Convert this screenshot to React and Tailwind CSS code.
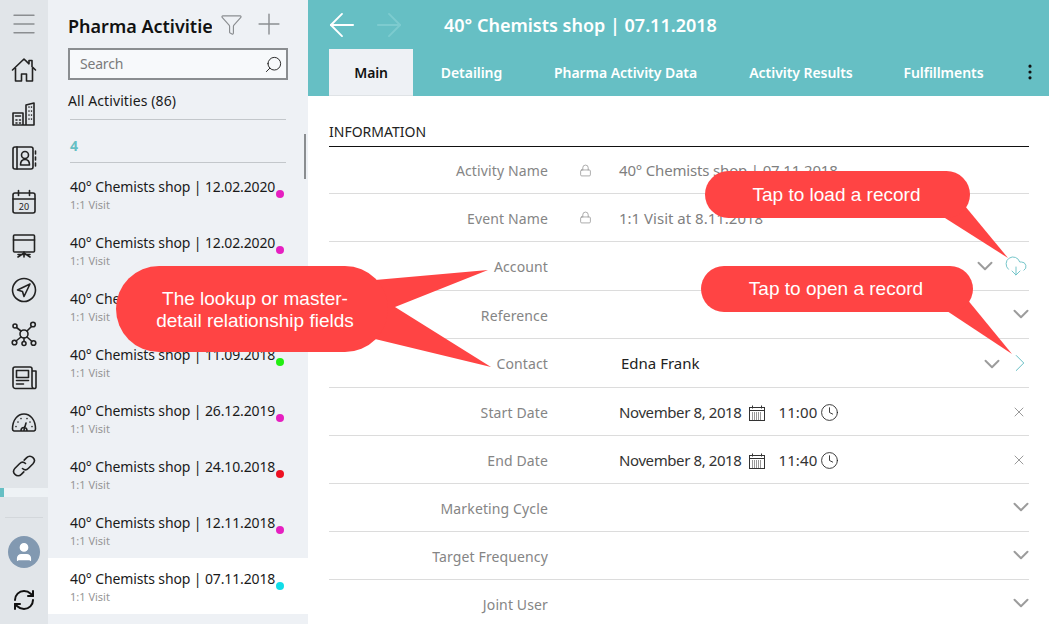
import {
  ArrowLeft,
  ArrowRight,
  ChevronDown,
  ChevronRight,
  Clock,
  CloudDownload,
  EllipsisVertical,
  Funnel,
  Lock,
  Menu,
  Plus,
  RefreshCw,
  Search,
  User,
  X,
} from "lucide-react";

const FONT = "font-['Noto_Sans',sans-serif]";

function RailIcon({ children }) {
  return (
    <div className="flex h-11 items-center justify-center">
      <svg width="26" height="26" viewBox="0 0 26 26" fill="none" stroke="#222" strokeWidth="1.6" strokeLinejoin="round" strokeLinecap="round">
        {children}
      </svg>
    </div>
  );
}

function Rail() {
  return (
    <div className="flex w-12 shrink-0 flex-col bg-[#e1e5e9]">
      <div className="flex h-12 items-center justify-center">
        <Menu size={30} strokeWidth={1.1} className="text-[#8b8e91]" />
      </div>
      <RailIcon>
        <path d="M1.5 13 13 2l5 4.8V3.5h3v6.2L24.5 13M4.5 11v13h6v-7h5v7h6V11" />
      </RailIcon>
      <RailIcon>
        <path d="M15 24V4l8-2v22zM2 24V12h10v12zM2 24h21M18 6v.1M20.5 6v.1M18 10v.1M20.5 10v.1M18 14v.1M20.5 14v.1M18 18v.1M20.5 18v.1M4.5 15h5M5 19h1M8.5 19h1M5 22h1M8.5 22h1" />
      </RailIcon>
      <RailIcon>
        <rect x="2" y="2" width="20" height="22" rx="2" />
        <path d="M6 2v22M24.5 6v3M24.5 12v3M24.5 18v3M9.5 20c0-4 2-5.500 4.500-5.500s4.500 1.500 4.500 5.500z" />
        <circle cx="14" cy="10" r="3.500" />
      </RailIcon>
      <RailIcon>
        <rect x="2" y="4" width="22" height="20" rx="2" />
        <path d="M2 10h22M7.500 1.500v5M18.500 1.500v5" />
        <text x="13" y="21" textAnchor="middle" fontSize="9" fill="#222" stroke="none">20</text>
      </RailIcon>
      <RailIcon>
        <rect x="2.500" y="2" width="21" height="17" rx="1" />
        <path d="M2.500 7h21M13 19v5M13 20l-6 4M13 20l6 4M7 21.500h12" />
      </RailIcon>
      <RailIcon>
        <circle cx="13" cy="13" r="11.500" />
        <path d="M19 7 6.500 13l5 1.500 1.500 5z" />
      </RailIcon>
      <RailIcon>
        <circle cx="13" cy="13" r="4" />
        <circle cx="4" cy="5" r="2" />
        <circle cx="22" cy="3.500" r="2.300" />
        <circle cx="3.500" cy="21.500" r="2.300" />
        <circle cx="13" cy="22.500" r="2" />
        <circle cx="22.500" cy="22" r="2.300" />
        <path d="M5.500 6.500 10 10M20.500 5.500 16 10M5 20l5-4M13 17v3.500M21 20.500 16 16" />
      </RailIcon>
      <RailIcon>
        <path d="M21 21V4a2 2 0 0 0-2-2H4a2 2 0 0 0-2 2v17a2.500 2.500 0 0 0 2.500 2.500h19A1.500 1.500 0 0 0 25 22V6h-4M21 21a2.500 2.500 0 0 0 2.500 2.500" />
        <rect x="5.500" y="5.500" width="12" height="7" />
        <path d="M5.500 15.500h12M5.500 19h7" />
      </RailIcon>
      <RailIcon>
        <path d="M3 22a2 2 0 0 1-1.500-2C1.500 11 6.500 5 13 5s11.500 6 11.500 15a2 2 0 0 1-1.500 2zM13 21l2-7M7 13v.1M10 9.500v.1M16 9.500v.1M19 13v.1M5 17.500v.1M21 17.500v.1M10 21.500a3 3 0 0 1 6 0" />
      </RailIcon>
      <RailIcon>
        <path d="M11.500 15.500c2 2 4.500 1.300 6-.2l4.500-4.500c1.800-2 1.800-4.500 0-6.200s-4.500-1.800-6.300 0l-2.500 2.500" />
        <path d="M14.500 10.500c-2-2-4.500-1.300-6 .2L4 15.200c-1.800 2-1.800 4.500 0 6.200s4.500 1.800 6.300 0l2.500-2.500" />
      </RailIcon>
      <div className="h-[9px] bg-[#eef2f5]">
        <div className="h-full w-1 bg-[#66bfc4]" />
      </div>
      <div className="mx-[5px] mt-5 border-t border-[#d3d7db]" />
      <div className="mx-2 mt-[18px] flex h-8 w-8 items-center justify-center overflow-hidden rounded-full bg-[#8299b1]">
        <User size={22} fill="#fff" stroke="#fff" strokeWidth={1.5} />
      </div>
      <div className="mt-5 flex justify-center">
        <RefreshCw size={24} strokeWidth={2} className="text-[#111]" />
      </div>
    </div>
  );
}

const activities = [
  { date: "12.02.2020", dot: "bg-[#e61fc0]" },
  { date: "12.02.2020", dot: "bg-[#e61fc0]" },
  { date: "05.11.2019", dot: "bg-[#e61fc0]" },
  { date: "11.09.2018", dot: "bg-[#22ee11]" },
  { date: "26.12.2019", dot: "bg-[#e61fc0]" },
  { date: "24.10.2018", dot: "bg-[#ee1122]" },
  { date: "12.11.2018", dot: "bg-[#e61fc0]" },
  { date: "07.11.2018", dot: "bg-[#11dde8]", selected: true },
];

function ActivityRow({ date, dot, selected }) {
  return (
    <div className={`h-14 w-[260px] shrink-0 pl-[22px] pt-[11px] ${selected ? "bg-white" : ""}`}>
      <div className="flex">
        <span className="w-[206px] whitespace-nowrap text-[14px] leading-5 tracking-[-0.12px] text-[#1a1a1a]">
          40° Chemists shop | {date}
        </span>
        <span className={`mt-[13px] h-2 w-2 rounded-full ${dot}`} />
      </div>
      <div className="-mt-px text-[11px] leading-[15px] text-[#969696]">1:1 Visit</div>
    </div>
  );
}

function ActivityList() {
  return (
    <div className="flex w-[260px] shrink-0 flex-col bg-[#eef1f5]">
      <div className="flex h-12 items-center pl-5">
        <div className="mt-[5px] w-[144px] overflow-hidden whitespace-nowrap text-[18px] font-semibold text-[#111]">
          Pharma Activities
        </div>
        <Funnel size={23} strokeWidth={1.2} className="ml-[8px] text-[#8b8e91]" />
        <Plus size={34} strokeWidth={1} className="ml-[9px] text-[#8b8e91]" />
      </div>
      <div className="mx-5 flex h-8 items-center justify-between border-2 border-[#8a8d90] bg-[#f7f9fb] pl-[10px] pr-[3px]">
        <span className="-mt-[2px] text-[14px] tracking-[-0.2px] text-[#7b7b7b]">Search</span>
        <Search size={19} strokeWidth={1.2} className="-scale-x-100 text-[#222]" />
      </div>
      <div className="ml-5 mt-[11px] text-[14px] leading-5 tracking-[0.1px] text-[#1a1a1a]">All Activities (86)</div>
      <div className="mx-[22px] mt-2 border-t border-[#c3c7cb]" />
      <div className="ml-[22px] mt-[16px] text-[14px] font-bold leading-5 text-[#66bfc4]">4</div>
      <div className="mx-[22px] mt-[6px] mb-[3px] border-t border-[#c3c7cb]" />
      {activities.map((a, i) => (
        <ActivityRow key={i} {...a} />
      ))}
    </div>
  );
}

function FormRow({ label, locked, value, right, height, low }) {
  const nudge = low ? "mt-[2px]" : "";
  return (
    <div className={`flex shrink-0 items-center border-b border-[#dcdcdc] ${height}`}>
      <div className={`w-[219px] text-right text-[14px] tracking-[0.13px] text-[#858585] ${nudge}`}>{label}</div>
      <div className="flex w-[71px] justify-center pl-[3px]">
        {locked && <Lock size={13} strokeWidth={1.3} className="text-[#8a8a8a]" />}
      </div>
      <div className={`flex-1 whitespace-nowrap text-[15px] ${nudge}`}>{value}</div>
      {right}
    </div>
  );
}

function Chev({ className = "-mr-[5px] -mt-[2px]" }) {
  return <ChevronDown size={26} strokeWidth={1.8} className={`text-[#9c9c9c] ${className}`} />;
}

function DateValue({ time }) {
  return (
    <div className="flex items-center tracking-[-0.4px] text-[#333]">
      <span>November 8, 2018</span>
      <svg width="16" height="16" viewBox="0 0 16 16" fill="none" stroke="#333" strokeWidth="1" className="ml-2">
        <rect x="0.500" y="2.500" width="15" height="13" />
        <path d="M0.500 5.500h15M3.500 0.500v3M12.500 0.500v3" />
        <path d="M3 8h10M3 10h10M3 12h10M3 14h10" strokeDasharray="1 1" />
      </svg>
      <span className="ml-[13px] tracking-[0.1px]">{time}</span>
      <Clock size={19} strokeWidth={1.1} className="ml-[3px] text-[#222]" />
    </div>
  );
}

function ClearX() {
  return <X size={16} strokeWidth={1} className="mr-[2px] text-[#666]" />;
}

function Main() {
  const tabs = [
    ["Detailing", "w-[117px]"],
    ["Pharma Activity Data", "w-[191px]"],
    ["Activity Results", "w-[160px]"],
    ["Fulfillments", "w-[125px]"],
  ];
  return (
    <div className="flex min-w-0 flex-1 flex-col bg-white">
      <div className="h-24 shrink-0 bg-[#66bfc4]">
        <div className="flex h-[49px] items-center pl-[15px]">
          <ArrowLeft size={38} strokeWidth={1.2} className="text-white" />
          <ArrowRight size={38} strokeWidth={1.2} className="ml-[9px] text-[#7dcbcf]" />
          <span className="ml-[36px] mt-[2px] text-[18px] font-semibold text-white">
            40° Chemists shop | 07.11.2018
          </span>
        </div>
        <div className="flex h-[47px] pl-[21px]">
          <div className="flex w-[84px] items-center justify-center border-b border-[#dfe3e6] bg-[#eef1f5] text-[14px] font-semibold tracking-[-0.2px] text-[#111]">
            Main
          </div>
          {tabs.map(([t, w]) => (
            <div key={t} className={`flex items-center justify-center whitespace-nowrap text-[14px] font-semibold tracking-[-0.05px] text-white ${w}`}>
              {t}
            </div>
          ))}
          <EllipsisVertical size={20} strokeWidth={1.8} className="ml-[14px] mt-[13px] text-[#111]" />
        </div>
      </div>
      <div className="flex min-h-0 flex-1 flex-col overflow-hidden pl-[21px] pr-5">
        <div className="flex h-[51px] shrink-0 items-end border-b border-[#111] pb-[4px] text-[14px] text-[#222]">
          INFORMATION
        </div>
        <FormRow
          label="Activity Name"
          locked
          value={<span className="tracking-[-0.17px] text-[#7f7f7f]">40° Chemists shop | 07.11.2018</span>}
          height="h-[47px]"
        />
        <FormRow low label="Event Name" locked value={<span className="text-[#7f7f7f]">1:1 Visit at 8.11.2018</span>} height="h-[48px]" />
        <FormRow
          label="Account"
          height="h-[49px]"
          right={
            <div className="flex items-center">
              <Chev className="mr-[6px]" />
              <CloudDownload size={24} strokeWidth={0.9} className="mr-[1px] text-[#66bfc4]" />
            </div>
          }
        />
        <FormRow low label="Reference" height="h-[48px]" right={<Chev />} />
        <FormRow
          label="Contact"
          value={<span className="ml-[2px] text-[#222]">Edna Frank</span>}
          height="h-[49px]"
          right={
            <div className="flex items-center">
              <Chev className="mr-0 mt-[2px]" />
              <ChevronRight size={30} strokeWidth={0.8} className="-mr-[6px] text-[#66bfc4]" />
            </div>
          }
        />
        <FormRow low label="Start Date" value={<DateValue time="11:00" />} right={<ClearX />} height="h-[48px]" />
        <FormRow low label="End Date" value={<DateValue time="11:40" />} right={<ClearX />} height="h-[48px]" />
        <FormRow low label="Marketing Cycle" right={<Chev />} height="h-[48px]" />
        <FormRow low label="Target Frequency" right={<Chev />} height="h-[48px]" />
        <FormRow low label="Joint User" right={<Chev />} height="h-[48px]" />
      </div>
    </div>
  );
}

function Callout({ className, children }) {
  return (
    <div className={`absolute flex items-center justify-center bg-[#ff4444] text-center font-['Liberation_Sans',sans-serif] text-[19px] leading-[22px] text-white ${className}`}>
      {children}
    </div>
  );
}

export default function App() {
  return (
    <div className={`relative flex h-[624px] w-[1049px] overflow-hidden ${FONT}`}>
      <Rail />
      <ActivityList />
      <Main />
      {/* scrollbar thumb of the list */}
      <div className="absolute left-[304px] top-[134px] h-[45px] w-[2px] bg-[#8a8d90]" />

      <svg width="1049" height="624" className="pointer-events-none absolute left-0 top-0" fill="#ff4444">
        <polygon points="375,280 488,270 395,307 491,367 375,339" />
        <polygon points="960,200 1008,258 945,218" />
        <polygon points="962,293 1012,354 947,311" />
      </svg>
      <Callout className="left-[116px] top-[266px] h-[86px] w-[272px] rounded-[43px] pl-[6px] pt-[2px]">
        The lookup or master-<br />detail relationship fields
      </Callout>
      <Callout className="left-[705px] top-[171px] h-[47px] w-[265px] rounded-[24px] pr-[2px]">Tap to load a record</Callout>
      <Callout className="left-[701px] top-[266px] h-[46px] w-[272px] rounded-[23px] pr-[2px]">Tap to open a record</Callout>
    </div>
  );
}
